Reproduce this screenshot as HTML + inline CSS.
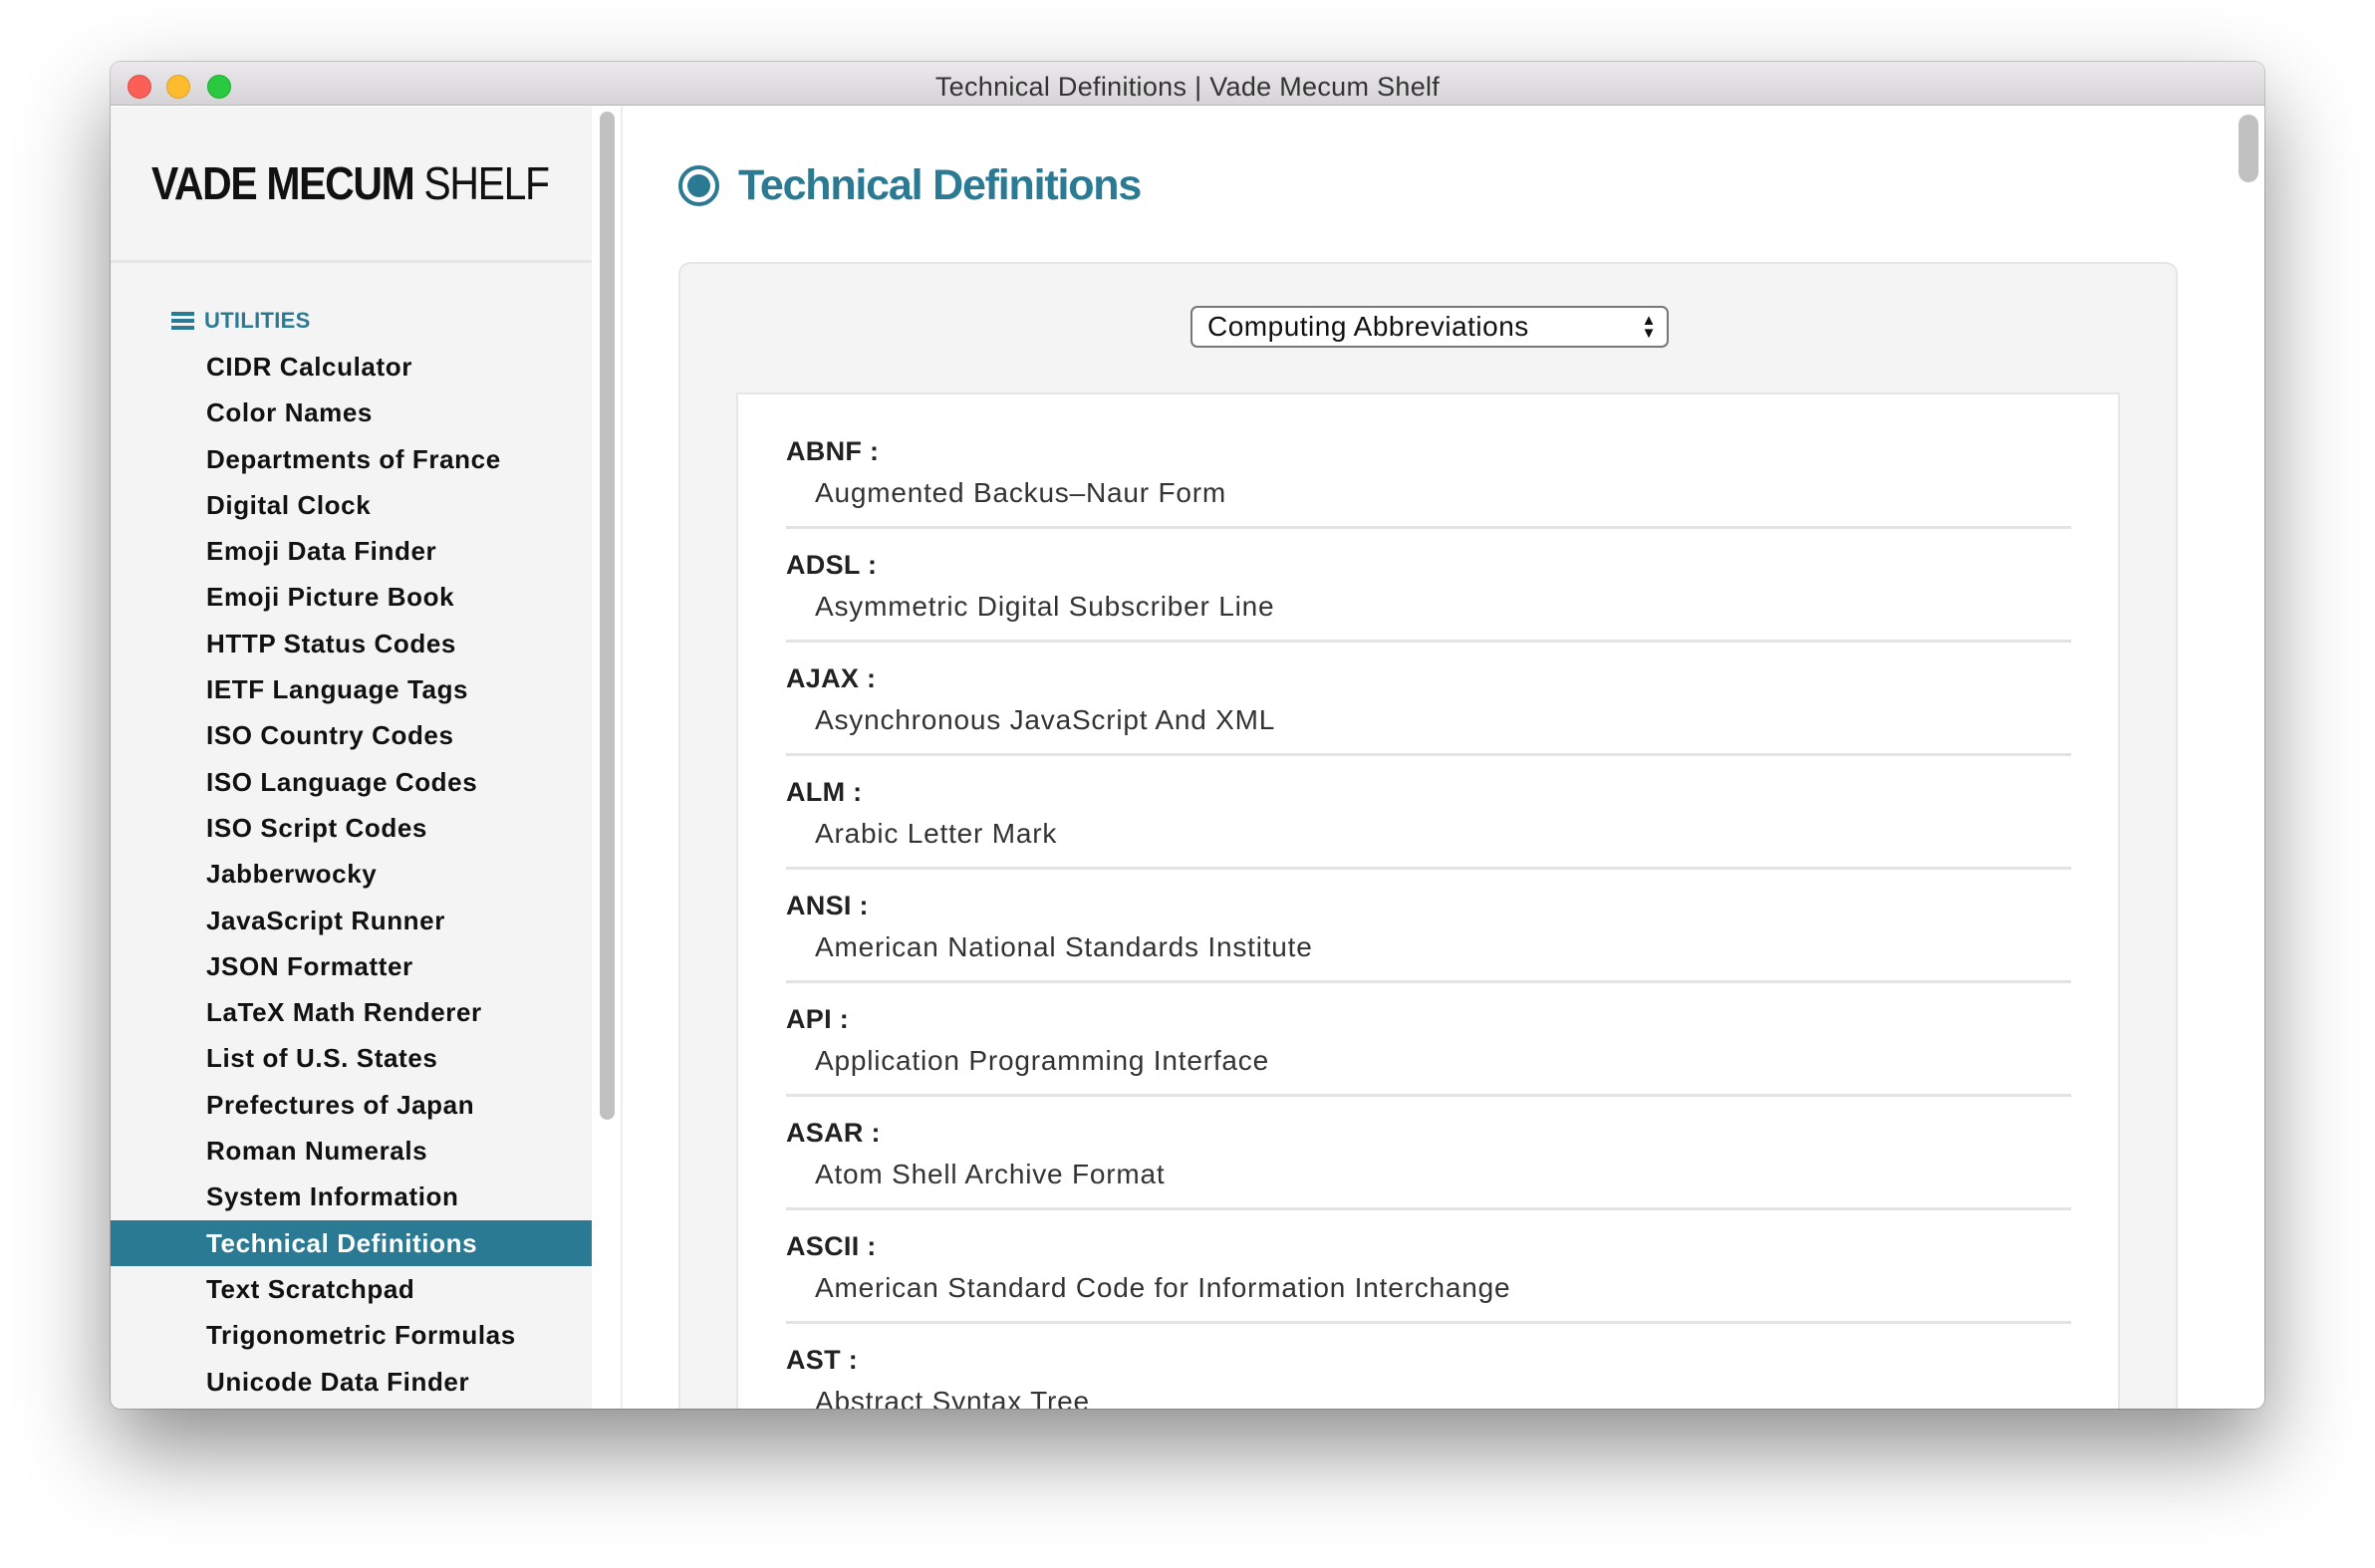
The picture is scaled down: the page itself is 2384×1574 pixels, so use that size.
<!DOCTYPE html>
<html><head><meta charset="utf-8">
<style>
*{box-sizing:border-box;margin:0;padding:0}
html,body{width:2384px;height:1574px;background:#fff;overflow:hidden;font-family:"Liberation Sans",sans-serif}
.win{position:absolute;left:111px;top:62px;width:2162px;height:1352px;border-radius:10px;overflow:hidden;background:#fff;
box-shadow:0 40px 90px rgba(0,0,0,.45),0 0 0 1px rgba(0,0,0,.18)}
.tb{position:absolute;left:0;top:0;right:0;height:44px;background:linear-gradient(#ebe9eb,#d5d3d5);border-bottom:1px solid #b5b3b5;
text-align:center;font-size:27px;line-height:50px;color:#333;letter-spacing:.3px}
.dot{position:absolute;top:13px;width:24px;height:24px;border-radius:50%}
.side{position:absolute;left:0;top:45px;width:483px;bottom:0;background:#f4f4f4}
.brand{position:absolute;left:41px;top:50px;font-size:46px;color:#111;letter-spacing:-1.5px;white-space:nowrap;transform:scaleX(.89);transform-origin:0 0}
.sep{position:absolute;left:0;top:154px;width:483px;height:3px;background:#e6e6e6}
.util{position:absolute;left:61px;top:202px;font-size:22px;font-weight:bold;color:#2b7a94;letter-spacing:.3px}
.util i{display:inline-block;width:23px;height:18px;vertical-align:-2px;margin-right:10px;
background:linear-gradient(#2b7a94 0 4px,transparent 4px 7px,#2b7a94 7px 11px,transparent 11px 14px,#2b7a94 14px 18px)}
.menu{position:absolute;left:0;top:238px;width:483px}
.menu div{height:46.3px;line-height:46.3px;padding-left:96px;font-size:26px;font-weight:bold;color:#111;white-space:nowrap;letter-spacing:.6px}
.menu div.on{background:#2b7a94;color:#fff}
.sb{position:absolute;left:491px;top:50px;width:15px;height:1012px;border-radius:8px;background:#c1c1c1}
.sbl{position:absolute;left:512px;top:45px;width:2px;bottom:0;background:#ececec}
.main{position:absolute;left:514px;top:45px;right:0;bottom:0;background:#fff}
.title{position:absolute;left:56px;top:49px;height:60px;display:flex;align-items:center}
.title .c{width:41px;height:41px;border-radius:50%;border:4px solid #2b7a94;background:#fff;position:relative;margin-right:19px}
.title .c:after{content:"";position:absolute;left:5px;top:5px;width:23px;height:23px;border-radius:50%;background:#2b7a94}
.title span{font-size:43px;font-weight:bold;color:#2b7a94;letter-spacing:-1.2px}
.panel{position:absolute;left:56px;top:156px;width:1505px;height:1200px;background:#f4f4f4;border:2px solid #e6e6e6;border-radius:12px}
.sel{position:absolute;left:512px;top:42px;width:480px;height:42px;background:#fff;border:2px solid #777;border-radius:7px;font-size:28px;line-height:38px;padding-left:15px;color:#111;letter-spacing:.5px}
.sel b{position:absolute;right:10px;top:6px;font-size:15px;line-height:13px;font-weight:normal}
.box{position:absolute;left:56px;top:129px;width:1389px;height:1100px;background:#fff;border:2px solid #e6e6e6}
.ent{position:absolute;left:48px;width:1290px;height:114px}
.ent:after{content:"";position:absolute;left:0;right:0;top:120px;height:3px;background:#e3e3e3}
.ent .t{position:absolute;left:0;top:30px;font-size:27px;font-weight:bold;color:#222;letter-spacing:.3px}
.ent .d{position:absolute;left:29px;top:71px;font-size:28px;color:#333;letter-spacing:.8px;white-space:nowrap}
.vs{position:absolute;right:6px;top:8px;width:20px;height:68px;border-radius:10px;background:#c1c1c1}
</style></head><body>
<div class="win">
 <div class="tb">Technical Definitions | Vade Mecum Shelf
  <div class="dot" style="left:17px;background:#fc5f57;border:1px solid #de4a42"></div>
  <div class="dot" style="left:56px;background:#fdbc2e;border:1px solid #dea12a"></div>
  <div class="dot" style="left:97px;background:#29c940;border:1px solid #1dab2f"></div>
 </div>
 <div class="side">
  <div class="brand"><b>VADE MECUM</b> SHELF</div>
  <div class="sep"></div>
  <div class="util"><i></i>UTILITIES</div>
  <div class="menu">
   <div>CIDR Calculator</div><div>Color Names</div><div>Departments of France</div><div>Digital Clock</div>
   <div>Emoji Data Finder</div><div>Emoji Picture Book</div><div>HTTP Status Codes</div><div>IETF Language Tags</div>
   <div>ISO Country Codes</div><div>ISO Language Codes</div><div>ISO Script Codes</div><div>Jabberwocky</div>
   <div>JavaScript Runner</div><div>JSON Formatter</div><div>LaTeX Math Renderer</div><div>List of U.S. States</div>
   <div>Prefectures of Japan</div><div>Roman Numerals</div><div>System Information</div><div class="on">Technical Definitions</div>
   <div>Text Scratchpad</div><div>Trigonometric Formulas</div><div>Unicode Data Finder</div>
  </div>
 </div>
 <div class="sb"></div><div class="sbl"></div>
 <div class="main">
  <div class="title"><div class="c"></div><span>Technical Definitions</span></div>
  <div class="panel">
   <div class="sel">Computing Abbreviations<b>▲<br>▼</b></div>
   <div class="box">
    <div class="ent" style="top:12px"><div class="t">ABNF :</div><div class="d">Augmented Backus–Naur Form</div></div>
    <div class="ent" style="top:126px"><div class="t">ADSL :</div><div class="d">Asymmetric Digital Subscriber Line</div></div>
    <div class="ent" style="top:240px"><div class="t">AJAX :</div><div class="d">Asynchronous JavaScript And XML</div></div>
    <div class="ent" style="top:354px"><div class="t">ALM :</div><div class="d">Arabic Letter Mark</div></div>
    <div class="ent" style="top:468px"><div class="t">ANSI :</div><div class="d">American National Standards Institute</div></div>
    <div class="ent" style="top:582px"><div class="t">API :</div><div class="d">Application Programming Interface</div></div>
    <div class="ent" style="top:696px"><div class="t">ASAR :</div><div class="d">Atom Shell Archive Format</div></div>
    <div class="ent" style="top:810px"><div class="t">ASCII :</div><div class="d">American Standard Code for Information Interchange</div></div>
    <div class="ent" style="top:924px"><div class="t">AST :</div><div class="d">Abstract Syntax Tree</div></div>
   </div>
  </div>
  <div class="vs"></div>
 </div>
</div>
</body></html>
